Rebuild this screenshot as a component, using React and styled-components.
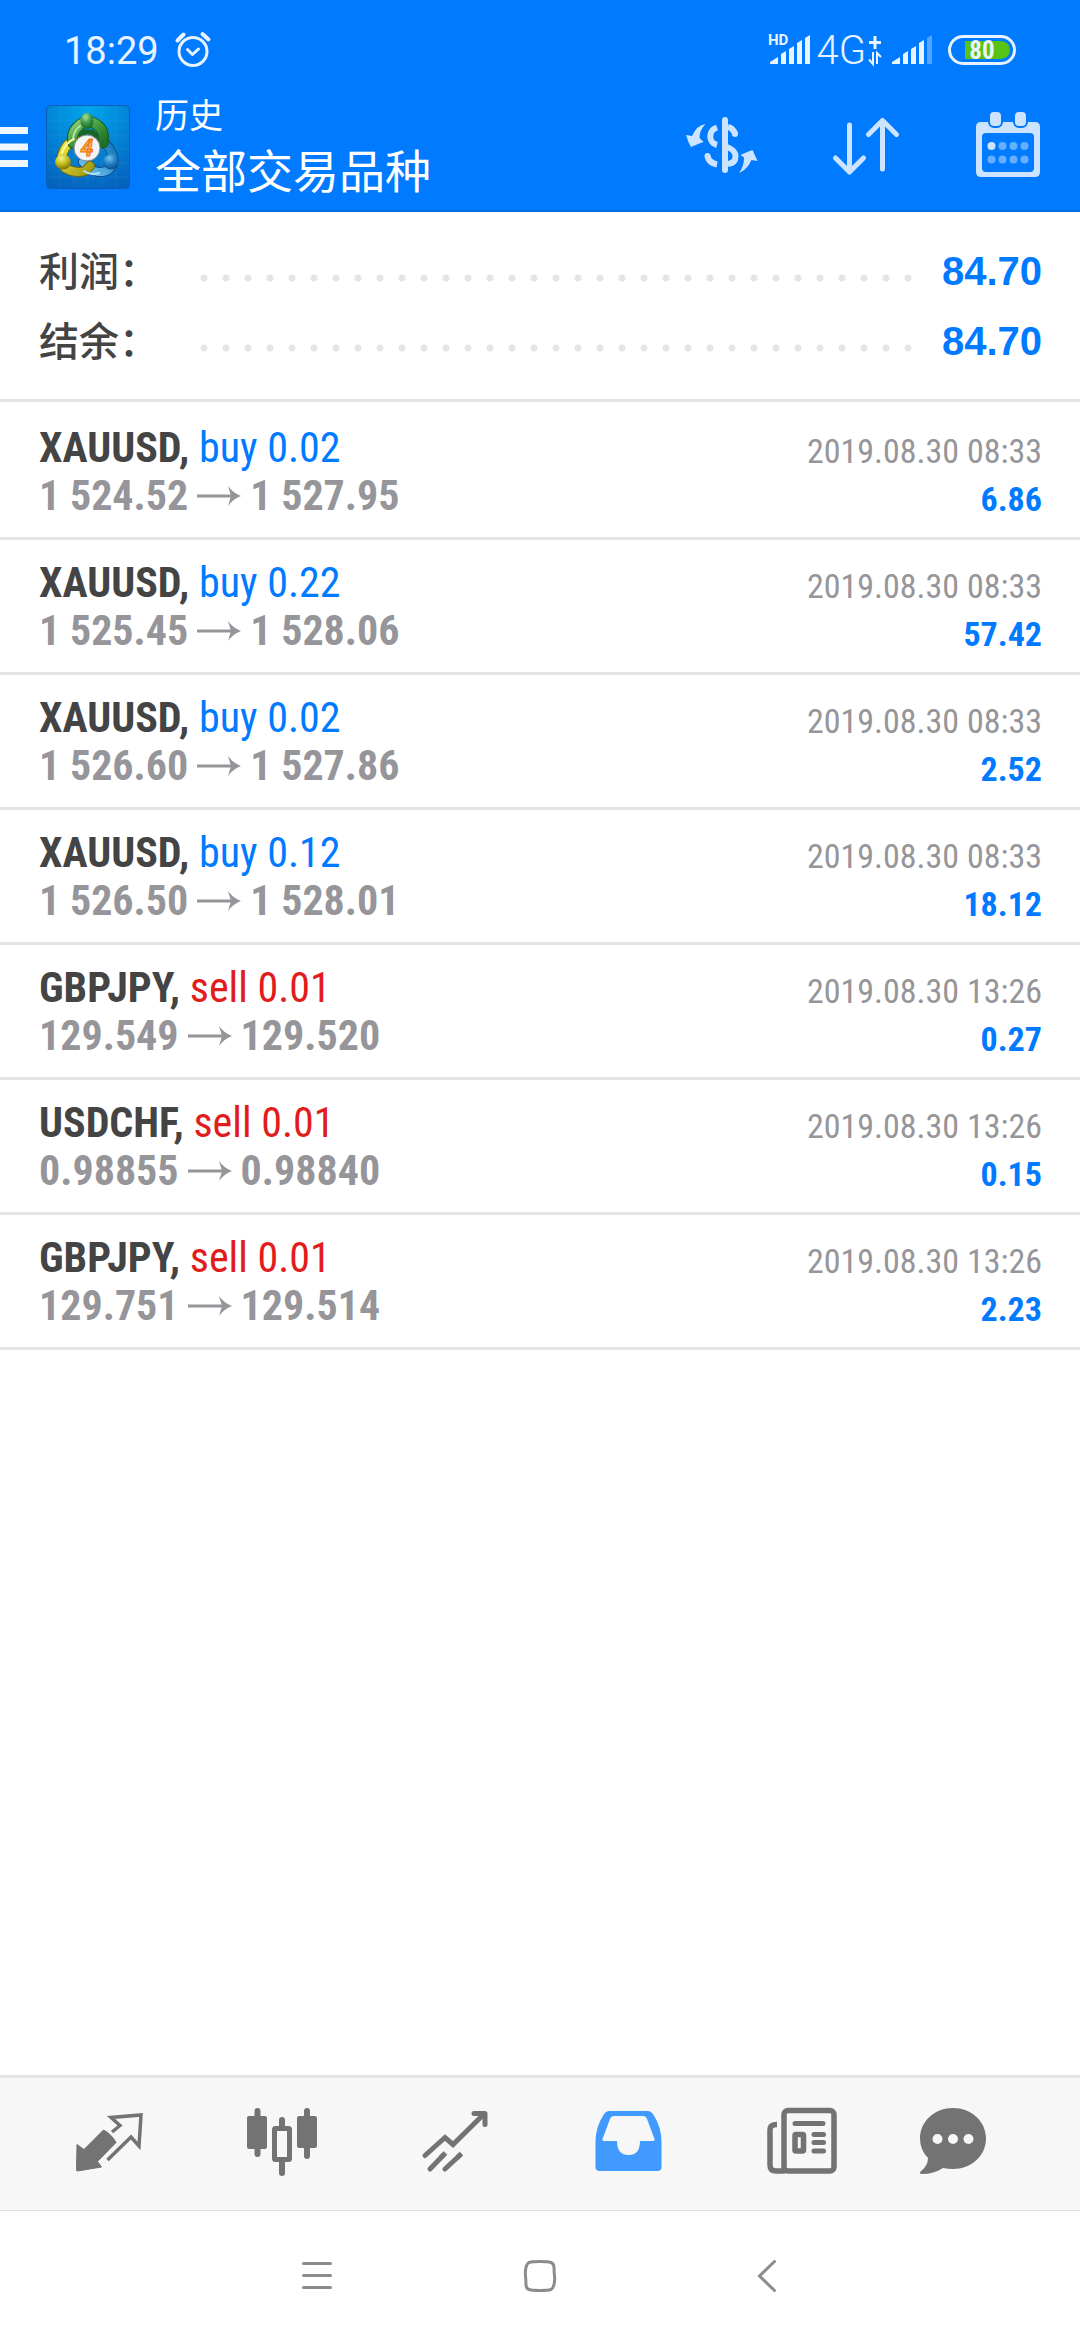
import React, { useState } from "react";
import styled, { createGlobalStyle } from "styled-components";

const GlobalStyle = createGlobalStyle`
  :root {
    --blue: #007aff;
    --red: #e21b1b;
    --dark: #444444;
    --grey: #95959a;
    --line: #e5e5e5;
    --condensed: "Roboto Condensed", "Roboto", "Noto Sans CJK SC", sans-serif;
  }

  * {
    box-sizing: border-box;
  }

  body {
    margin: 0;
    background: #ffffff;
    font-family: "Roboto", "Noto Sans CJK SC", sans-serif;
  }

  button {
    padding: 0;
    border: 0;
    background: none;
    cursor: pointer;
  }

  svg {
    display: block;
    flex: none;
    overflow: visible;
  }
`;

const Page = styled.div`
  display: flex;
  flex-direction: column;
  min-height: 100vh;
`;

const Header = styled.header`
  background: var(--blue);
  border-bottom: 2px solid #006ee0;
  color: #ffffff;
`;

const StatusBar = styled.div`
  display: flex;
  align-items: center;
  justify-content: space-between;
  height: 84px;
  padding: 16px 64px 0;
  color: #e8f3ff;
`;

const StatusGroup = styled.div`
  display: flex;
  align-items: center;
  gap: ${(props) => props.$gap};
`;

const Clock = styled.time`
  padding-top: 2px;
  font-size: 38px;
  line-height: 48px;
`;

const Network = styled.span`
  padding-top: 2px;
  font-size: 40px;
  line-height: 48px;
  font-weight: 300;
`;

const Toolbar = styled.div`
  display: flex;
  align-items: center;
  height: 126px;
  padding-right: 40px;
`;

const MenuButton = styled.button`
  margin-right: 18px;
`;

const Titles = styled.div`
  flex: 1;
  padding-left: 25px;
`;

const Title = styled.h1`
  margin: 0;
  font-size: 34px;
  line-height: 50px;
  font-weight: 400;
`;

const Subtitle = styled.p`
  margin: 0;
  font-size: 46px;
  line-height: 62px;
  font-weight: 400;
`;

const Actions = styled.div`
  display: flex;
  align-items: center;
  gap: 74px;
  padding-bottom: 5px;
  color: #cce4ff;

  button {
    color: inherit;
  }
`;

const Summary = styled.dl`
  margin: 0;
  padding: 24px 38px 23px 39px;
  border-bottom: 3px solid var(--line);
`;

const SummaryRow = styled.div`
  display: flex;
  align-items: center;
  height: 70px;

  dt {
    width: 154px;
    padding-bottom: 4px;
    font-size: 40px;
    font-weight: 500;
    color: var(--dark);
    white-space: nowrap;
  }

  dd {
    margin: 0 0 0 22px;
    font-family: "Liberation Sans", sans-serif;
    font-size: 40px;
    font-weight: 700;
    color: var(--blue);
  }
`;

const Leader = styled.span`
  flex: 1;
  height: 8px;
  margin-top: 14px;
  background: radial-gradient(circle, #e5e5e5 3px, transparent 4px) 0 0 / 22px
    8px repeat-x;
`;

const Deals = styled.ul`
  flex: 1;
  margin: 0;
  padding: 3px 0 0;
  list-style: none;
`;

const Deal = styled.li`
  display: flex;
  justify-content: space-between;
  height: 135px;
  padding: 19px 38px 0 39px;
  border-bottom: 3px solid var(--line);
  font-family: var(--condensed);
  line-height: 48px;
`;

const Symbol = styled.div`
  font-size: 42px;
  font-weight: 700;
  color: var(--dark);
`;

const Side = styled.span`
  font-weight: 400;
  color: ${(props) => (props.$side === "sell" ? "var(--red)" : "var(--blue)")};
`;

const Prices = styled.div`
  display: flex;
  align-items: center;
  gap: 8px;
  font-size: 42px;
  font-weight: 700;
  color: var(--grey);
`;

const Outcome = styled.div`
  padding-top: 3px;
  font-size: 34px;
  text-align: right;
`;

const Time = styled.div`
  color: var(--grey);
`;

const Profit = styled.div`
  font-weight: 700;
  color: var(--blue);
`;

const TabBar = styled.nav`
  display: flex;
  height: 136px;
  padding: 0 61px 0 22px;
  background: #f7f7f7;
  border-top: 3px solid var(--line);
  border-bottom: 1px solid #e0e0e0;
`;

const Tab = styled.button`
  display: flex;
  align-items: center;
  justify-content: center;
  flex: ${(props) => (props.$last ? 132 : 173)} 1 0;
  color: ${(props) => (props.$active ? "#419bff" : "#737373")};
`;

const SystemBar = styled.div`
  display: flex;
  align-items: center;
  justify-content: center;
  gap: 123px;
  height: 129px;

  button {
    display: flex;
    justify-content: center;
    width: 100px;
    color: #8c8c8c;
  }
`;

const AlarmIcon = () => (
  <svg width="36" height="36" viewBox="0 0 36 36" fill="none" stroke="currentColor" strokeLinecap="round">
    <circle cx="18" cy="19.5" r="14" strokeWidth="3" />
    <path d="M12.5 17.5l5 5 6-5.5" strokeWidth="3" strokeLinejoin="round" />
    <path d="M2.5 8.5l6-6M33.5 7.5l-6-5.5" strokeWidth="4" />
  </svg>
);

const HdSignalIcon = () => (
  <svg width="42" height="32" viewBox="0 0 42 32" fill="currentColor">
    <path d="M2 30v-2l8-5v7zM13 30V20l5-3v13zM21 30V15l5-3v18zM29 30V9l5-3v24zM37 30V4l5-3v29z" />
    <text x="0" y="11" fontSize="15" fontWeight="700" fontFamily="Roboto, sans-serif">
      HD
    </text>
  </svg>
);

const SignalIcon = () => (
  <svg width="40" height="32" viewBox="0 0 40 32" fill="currentColor">
    <path d="M0 30v-2l8-5v7zM11 30V20l5-3v13zM19 30V15l5-3v18zM27 30V9l5-3v24z" />
    <path d="M35 30V4l5-3v29z" opacity="0.35" />
  </svg>
);

const DataIcon = () => (
  <svg width="14" height="30" viewBox="0 0 14 30" fill="none" stroke="currentColor" strokeWidth="2">
    <path d="M7 1v13M1 7.500h12" strokeWidth="3" />
    <path d="M5 17v12l-4-4.500M9 29V18l4 4" />
  </svg>
);

const BatteryIcon = () => (
  <svg width="68" height="30" viewBox="0 0 68 30">
    <rect x="1.5" y="1.5" width="65" height="27" rx="13.5" fill="none" stroke="currentColor" strokeWidth="3" />
    <path d="M18 6h35q9 1 9 9t-9 9H18q-1 0-1-1V7q0-1 1-1z" fill="#57c314" />
    <text x="34" y="24" textAnchor="middle" fontSize="25" fontWeight="700" fontFamily="Roboto Condensed, Roboto, sans-serif" fill="currentColor">
      80
    </text>
  </svg>
);

const MenuIcon = () => (
  <svg width="28" height="40" viewBox="0 0 28 40" fill="#f0f7ff">
    <path d="M0 0h28v7H0zM0 16.500h28v7H0zM0 33h28v7H0z" />
  </svg>
);

const AppLogo = () => (
  <svg width="84" height="84" viewBox="0 0 84 84" role="img" aria-label="MetaTrader 4">
    <defs>
      <radialGradient id="logo-bg" cx="0.5" cy="0.05" r="1">
        <stop offset="0" stopColor="#00a5ee" />
        <stop offset="1" stopColor="#0562bd" />
      </radialGradient>
      <linearGradient id="logo-green" x1="0" y1="0" x2="1" y2="1">
        <stop offset="0" stopColor="#8fd07a" />
        <stop offset="0.5" stopColor="#3f9a3a" />
        <stop offset="1" stopColor="#1f6f25" />
      </linearGradient>
      <linearGradient id="logo-yellow" x1="0" y1="0" x2="1" y2="1">
        <stop offset="0" stopColor="#f2ee4a" />
        <stop offset="1" stopColor="#a59a10" />
      </linearGradient>
      <linearGradient id="logo-blue" x1="0" y1="1" x2="1" y2="0">
        <stop offset="0" stopColor="#6fc3f2" />
        <stop offset="1" stopColor="#1272b8" />
      </linearGradient>
      <radialGradient id="ball-green" cx="0.4" cy="0.25" r="0.8">
        <stop offset="0" stopColor="#a8e0a0" />
        <stop offset="0.5" stopColor="#3d9a48" />
        <stop offset="1" stopColor="#145e22" />
      </radialGradient>
      <radialGradient id="ball-yellow" cx="0.4" cy="0.25" r="0.8">
        <stop offset="0" stopColor="#f7f48c" />
        <stop offset="0.5" stopColor="#c4bb1c" />
        <stop offset="1" stopColor="#6e690c" />
      </radialGradient>
      <radialGradient id="ball-blue" cx="0.4" cy="0.25" r="0.8">
        <stop offset="0" stopColor="#74c3f0" />
        <stop offset="0.5" stopColor="#1f80c4" />
        <stop offset="1" stopColor="#084a86" />
      </radialGradient>
    </defs>
    <rect x="0.500" y="0.500" width="83" height="83" rx="4" fill="url(#logo-bg)" stroke="#0a5cb8" />
    <path d="M14 1v82M28 1v82M42 1v82M56 1v82M70 1v82M1 16h82M1 30h82M1 44h82M1 58h82M1 72h82" stroke="#ffffff" strokeOpacity="0.06" />
    <g fill="none" strokeLinecap="round">
      <path d="M56 37q9 4 12 18q-3 13-16 12q-10-2-15-10" stroke="#0b4d86" strokeWidth="10" />
      <path d="M56 37q9 4 12 18q-3 13-16 12q-10-2-15-10" stroke="url(#logo-blue)" strokeWidth="8" />
      <path d="M33 35q-14 0-18 20M19 63q10 6 20 3l5-5" stroke="#6e690c" strokeWidth="10" />
      <path d="M33 35q-14 0-18 20M19 63q10 6 20 3l5-5" stroke="url(#logo-yellow)" strokeWidth="8" />
      <path d="M27 38q-3-13 11-21M46 17q14 6 11 21" stroke="#14571d" strokeWidth="11" />
      <path d="M27 38q-3-13 11-21M46 17q14 6 11 21" stroke="url(#logo-green)" strokeWidth="9" />
      <path d="M35 31l3-4h8l4 4" stroke="#1b6524" strokeWidth="5" />
      <path d="M38 66q7 5 15 2" stroke="#ace0fa" strokeWidth="2" />
      <path d="M16 48q4-11 12-14" stroke="#faf9a0" strokeWidth="2" />
      <path d="M27 33q2-9 7-12" stroke="#b4e6a4" strokeWidth="2" />
    </g>
    <ellipse cx="41" cy="16" rx="6.500" ry="8" fill="url(#ball-green)" />
    <ellipse cx="17" cy="57" rx="8" ry="7.500" fill="url(#ball-yellow)" />
    <ellipse cx="65" cy="57" rx="8" ry="7.500" fill="url(#ball-blue)" />
    <circle cx="41" cy="43" r="13" fill="#f4f4f4" stroke="#8a8a8a" />
    <text x="41" y="51" textAnchor="middle" fontSize="23" fontWeight="700" fontStyle="italic" fontFamily="Roboto, sans-serif" fill="#ffae4a" stroke="#ec7416">
      4
    </text>
  </svg>
);

const CurrencyIcon = () => (
  <svg width="74" height="60" viewBox="0 0 74 60" fill="none" stroke="currentColor" strokeWidth="6">
    <path d="M2 20l6 1q5-11 13.500-12-6 6-6 14l4 4q-6 2-12.500 5-3-5-5-12z" fill="currentColor" stroke="none" />
    <path d="M73.500 46l-5-11q-6 2-12 5l3.500 2.500q0 9-5 15.500 8-3 12.500-13z" fill="currentColor" stroke="none" />
    <path d="M33 12.500c-9 3-9 15 0 17.500" />
    <path d="M23.500 41q1.500 7 9.500 8.500" />
    <path d="M23.500 41v0" strokeLinecap="round" />
    <path d="M41 5v50" strokeLinecap="round" />
    <path d="M44 12q5 1 7.500 7.500" />
    <path d="M51 19v0" strokeLinecap="round" />
    <path d="M43 32q8.500 3 8.500 9.500t-7.500 7.500" />
  </svg>
);

const SortIcon = () => (
  <svg width="70" height="60" viewBox="0 0 70 60" fill="none" stroke="currentColor" strokeWidth="5" strokeLinecap="round" strokeLinejoin="round">
    <path d="M17.500 10v46M3.500 43l14 14 14-14" />
    <path d="M50.500 54V6M36.500 19.500l14-14 14 14" />
  </svg>
);

const CalendarIcon = () => (
  <svg width="64" height="66" viewBox="0 0 64 66" fill="currentColor">
    <path d="M5 10h54q5 0 5 5v45q0 5-5 5H5q-5 0-5-5V15q0-5 5-5zM10 21q-4 0-4 4v31q0 4 4 4h44q4 0 4-4V25q0-4-4-4z" fillRule="evenodd" />
    <g stroke="#007aff" strokeWidth="2">
      <rect x="13" y="-1" width="13" height="16" rx="5" />
      <rect x="38" y="-1" width="13" height="16" rx="5" />
    </g>
    <circle cx="15.500" cy="34" r="4" />
    <g opacity="0.5">
      <circle cx="26.500" cy="34" r="4" />
      <circle cx="37.500" cy="34" r="4" />
      <circle cx="48.500" cy="34" r="4" />
      <circle cx="15.500" cy="47.500" r="4" />
      <circle cx="26.500" cy="47.500" r="4" />
      <circle cx="37.500" cy="47.500" r="4" />
      <circle cx="48.500" cy="47.500" r="4" />
    </g>
  </svg>
);

const PriceArrow = () => (
  <svg width="46" height="20" viewBox="0 0 46 20" aria-label="to">
    <path d="M1 10h36" stroke="currentColor" strokeWidth="3" />
    <path d="M32 0q5 7 13 10-8 3-13 10l3-10z" fill="currentColor" />
  </svg>
);

const QuotesIcon = () => (
  <svg width="72" height="72" viewBox="0 0 72 72">
    <path d="M4 36.500l7 5 19.500-19.500q8 4 12.500 12.500L24.500 53.500l4 5.500-24 4q-1 0-1-1.500z" fill="currentColor" stroke="currentColor" strokeLinejoin="round" />
    <path d="M39 24l8-6.500-9-8 30-2.500-2 31-8-9-23.500 23" fill="none" stroke="currentColor" strokeWidth="3.500" />
  </svg>
);

const ChartIcon = () => (
  <svg width="72" height="72" viewBox="0 0 72 72" fill="currentColor">
    <rect x="8.500" y="0" width="6" height="49" rx="3" />
    <rect x="1" y="8" width="20" height="33" rx="2" />
    <rect x="58" y="0" width="6" height="51" rx="3" />
    <rect x="51" y="8" width="20" height="32" rx="2" />
    <rect x="33" y="9" width="6" height="12" rx="3" />
    <rect x="33" y="50" width="6" height="18" rx="3" />
    <rect x="28.500" y="20.500" width="15" height="31" rx="1" fill="none" stroke="currentColor" strokeWidth="5" />
  </svg>
);

const TradeIcon = () => (
  <svg width="72" height="72" viewBox="0 0 72 72" fill="none" stroke="currentColor" strokeWidth="5" strokeLinecap="round">
    <path d="M6 47.500l20-18 8 7L65 6" strokeLinejoin="miter" />
    <path d="M55 5.500h11v11" strokeLinejoin="round" />
    <path d="M11 61l13-13.500M26 61l14.500-13.500" />
    <path d="M22 49.500l4.500-4.500M38 50l4.500-4.500" strokeLinecap="butt" />
  </svg>
);

const HistoryIcon = () => (
  <svg width="72" height="72" viewBox="0 0 72 72" fill="currentColor" fillRule="evenodd">
    <path d="M17 3h39q3 0 5 3 8.500 13 8.500 28v25q0 4-4 4h-58q-4 0-4-4V34Q3.500 19 12 6q2-3 5-3zM22 8q-3 0-4 3l-7.500 20q-.5 2 2 2H25q0 14 11.500 14T48 33h12.500q2.500 0 2-2L55 11q-1-3-4-3z" />
  </svg>
);

const NewsIcon = () => (
  <svg width="72" height="72" viewBox="0 0 72 72" fill="none" stroke="currentColor" strokeWidth="5">
    <rect x="19" y="2.500" width="50" height="60.500" rx="4" strokeWidth="5.500" />
    <path d="M12 16.500q-7 0-7 5V57q0 6 6 6h9" strokeWidth="5.500" />
    <path d="M30 15.500h28M49 26.500h9.500M49 34.500h9.500M49 43h9.500" strokeLinecap="round" />
    <rect x="30" y="26.500" width="8.500" height="16.500" rx="1" strokeWidth="5.500" />
  </svg>
);

const ChatIcon = () => (
  <svg width="72" height="72" viewBox="0 0 72 72" fill="currentColor" fillRule="evenodd">
    <path d="M36 0c18 0 33 13 33 30.500S54 61 36 61q-5 0-10-1-9 6-21 6-3 0-1.500-2.500Q11 58 11 50 3 42 3 30.500C3 13 18 0 36 0zM20.500 26a5 5 0 1 0 0 10 5 5 0 0 0 0-10zM36 26a5 5 0 1 0 0 10 5 5 0 0 0 0-10zM51.500 26a5 5 0 1 0 0 10 5 5 0 0 0 0-10z" />
  </svg>
);

const RecentsIcon = () => (
  <svg width="32" height="32" viewBox="0 0 32 32" fill="none" stroke="currentColor" strokeWidth="3" strokeLinecap="round">
    <path d="M2.500 3.500h27M2.500 15.500h27M2.500 27.500h27" />
  </svg>
);

const HomeIcon = () => (
  <svg width="32" height="32" viewBox="0 0 32 32" fill="none" stroke="currentColor" strokeWidth="3">
    <path d="M16 1.500q8 0 11 1 3 1 3 5t.5 8.500-.5 8.500-3 5q-3 1-11 1t-11-1q-3-1-3-5t-.5-8.500.5-8.500 3-5q3-1 11-1z" />
  </svg>
);

const BackIcon = () => (
  <svg width="32" height="32" viewBox="0 0 32 32" fill="none" stroke="currentColor" strokeWidth="3" strokeLinecap="round">
    <path d="M27.500 1.500L12.500 16l15 14.500" />
  </svg>
);

const deals = [
  { id: 1, symbol: "XAUUSD", side: "buy", volume: "0.02", open: "1 524.52", close: "1 527.95", time: "2019.08.30 08:33", profit: "6.86" },
  { id: 2, symbol: "XAUUSD", side: "buy", volume: "0.22", open: "1 525.45", close: "1 528.06", time: "2019.08.30 08:33", profit: "57.42" },
  { id: 3, symbol: "XAUUSD", side: "buy", volume: "0.02", open: "1 526.60", close: "1 527.86", time: "2019.08.30 08:33", profit: "2.52" },
  { id: 4, symbol: "XAUUSD", side: "buy", volume: "0.12", open: "1 526.50", close: "1 528.01", time: "2019.08.30 08:33", profit: "18.12" },
  { id: 5, symbol: "GBPJPY", side: "sell", volume: "0.01", open: "129.549", close: "129.520", time: "2019.08.30 13:26", profit: "0.27" },
  { id: 6, symbol: "USDCHF", side: "sell", volume: "0.01", open: "0.98855", close: "0.98840", time: "2019.08.30 13:26", profit: "0.15" },
  { id: 7, symbol: "GBPJPY", side: "sell", volume: "0.01", open: "129.751", close: "129.514", time: "2019.08.30 13:26", profit: "2.23" },
];

const tabs = [
  { id: "quotes", label: "行情", Icon: QuotesIcon },
  { id: "chart", label: "图表", Icon: ChartIcon },
  { id: "trade", label: "交易", Icon: TradeIcon },
  { id: "history", label: "历史", Icon: HistoryIcon },
  { id: "news", label: "新闻", Icon: NewsIcon },
  { id: "chat", label: "消息", Icon: ChatIcon },
];

const App = () => {
  const [activeTab, setActiveTab] = useState("history");

  return (
    <Page>
      <GlobalStyle />
      <Header>
        <StatusBar>
          <StatusGroup $gap="16px">
            <Clock>18:29</Clock>
            <AlarmIcon />
          </StatusGroup>
          <StatusGroup $gap="16px">
            <StatusGroup $gap="10px">
              <StatusGroup $gap="6px">
                <HdSignalIcon />
                <StatusGroup $gap="2px">
                  <Network>4G</Network>
                  <DataIcon />
                </StatusGroup>
              </StatusGroup>
              <SignalIcon />
            </StatusGroup>
            <BatteryIcon />
          </StatusGroup>
        </StatusBar>
        <Toolbar>
          <MenuButton type="button" aria-label="菜单">
            <MenuIcon />
          </MenuButton>
          <AppLogo />
          <Titles>
            <Title>历史</Title>
            <Subtitle>全部交易品种</Subtitle>
          </Titles>
          <Actions>
            <button type="button" aria-label="交易品种">
              <CurrencyIcon />
            </button>
            <button type="button" aria-label="排序">
              <SortIcon />
            </button>
            <button type="button" aria-label="日期">
              <CalendarIcon />
            </button>
          </Actions>
        </Toolbar>
      </Header>

      <Summary>
        <SummaryRow>
          <dt>利润：</dt>
          <Leader />
          <dd>84.70</dd>
        </SummaryRow>
        <SummaryRow>
          <dt>结余：</dt>
          <Leader />
          <dd>84.70</dd>
        </SummaryRow>
      </Summary>

      <Deals>
        {deals.map((deal) => (
          <Deal key={deal.id}>
            <div>
              <Symbol>
                {deal.symbol},{" "}
                <Side $side={deal.side}>
                  {deal.side} {deal.volume}
                </Side>
              </Symbol>
              <Prices>
                <span>{deal.open}</span>
                <PriceArrow />
                <span>{deal.close}</span>
              </Prices>
            </div>
            <Outcome>
              <Time>{deal.time}</Time>
              <Profit>{deal.profit}</Profit>
            </Outcome>
          </Deal>
        ))}
      </Deals>

      <TabBar>
        {tabs.map(({ id, label, Icon }, index) => (
          <Tab
            key={id}
            type="button"
            aria-label={label}
            $active={id === activeTab}
            $last={index === tabs.length - 1}
            onClick={() => setActiveTab(id)}
          >
            <Icon />
          </Tab>
        ))}
      </TabBar>

      <SystemBar>
        <button type="button" aria-label="最近任务">
          <RecentsIcon />
        </button>
        <button type="button" aria-label="主屏幕">
          <HomeIcon />
        </button>
        <button type="button" aria-label="返回">
          <BackIcon />
        </button>
      </SystemBar>
    </Page>
  );
};

export default App;
